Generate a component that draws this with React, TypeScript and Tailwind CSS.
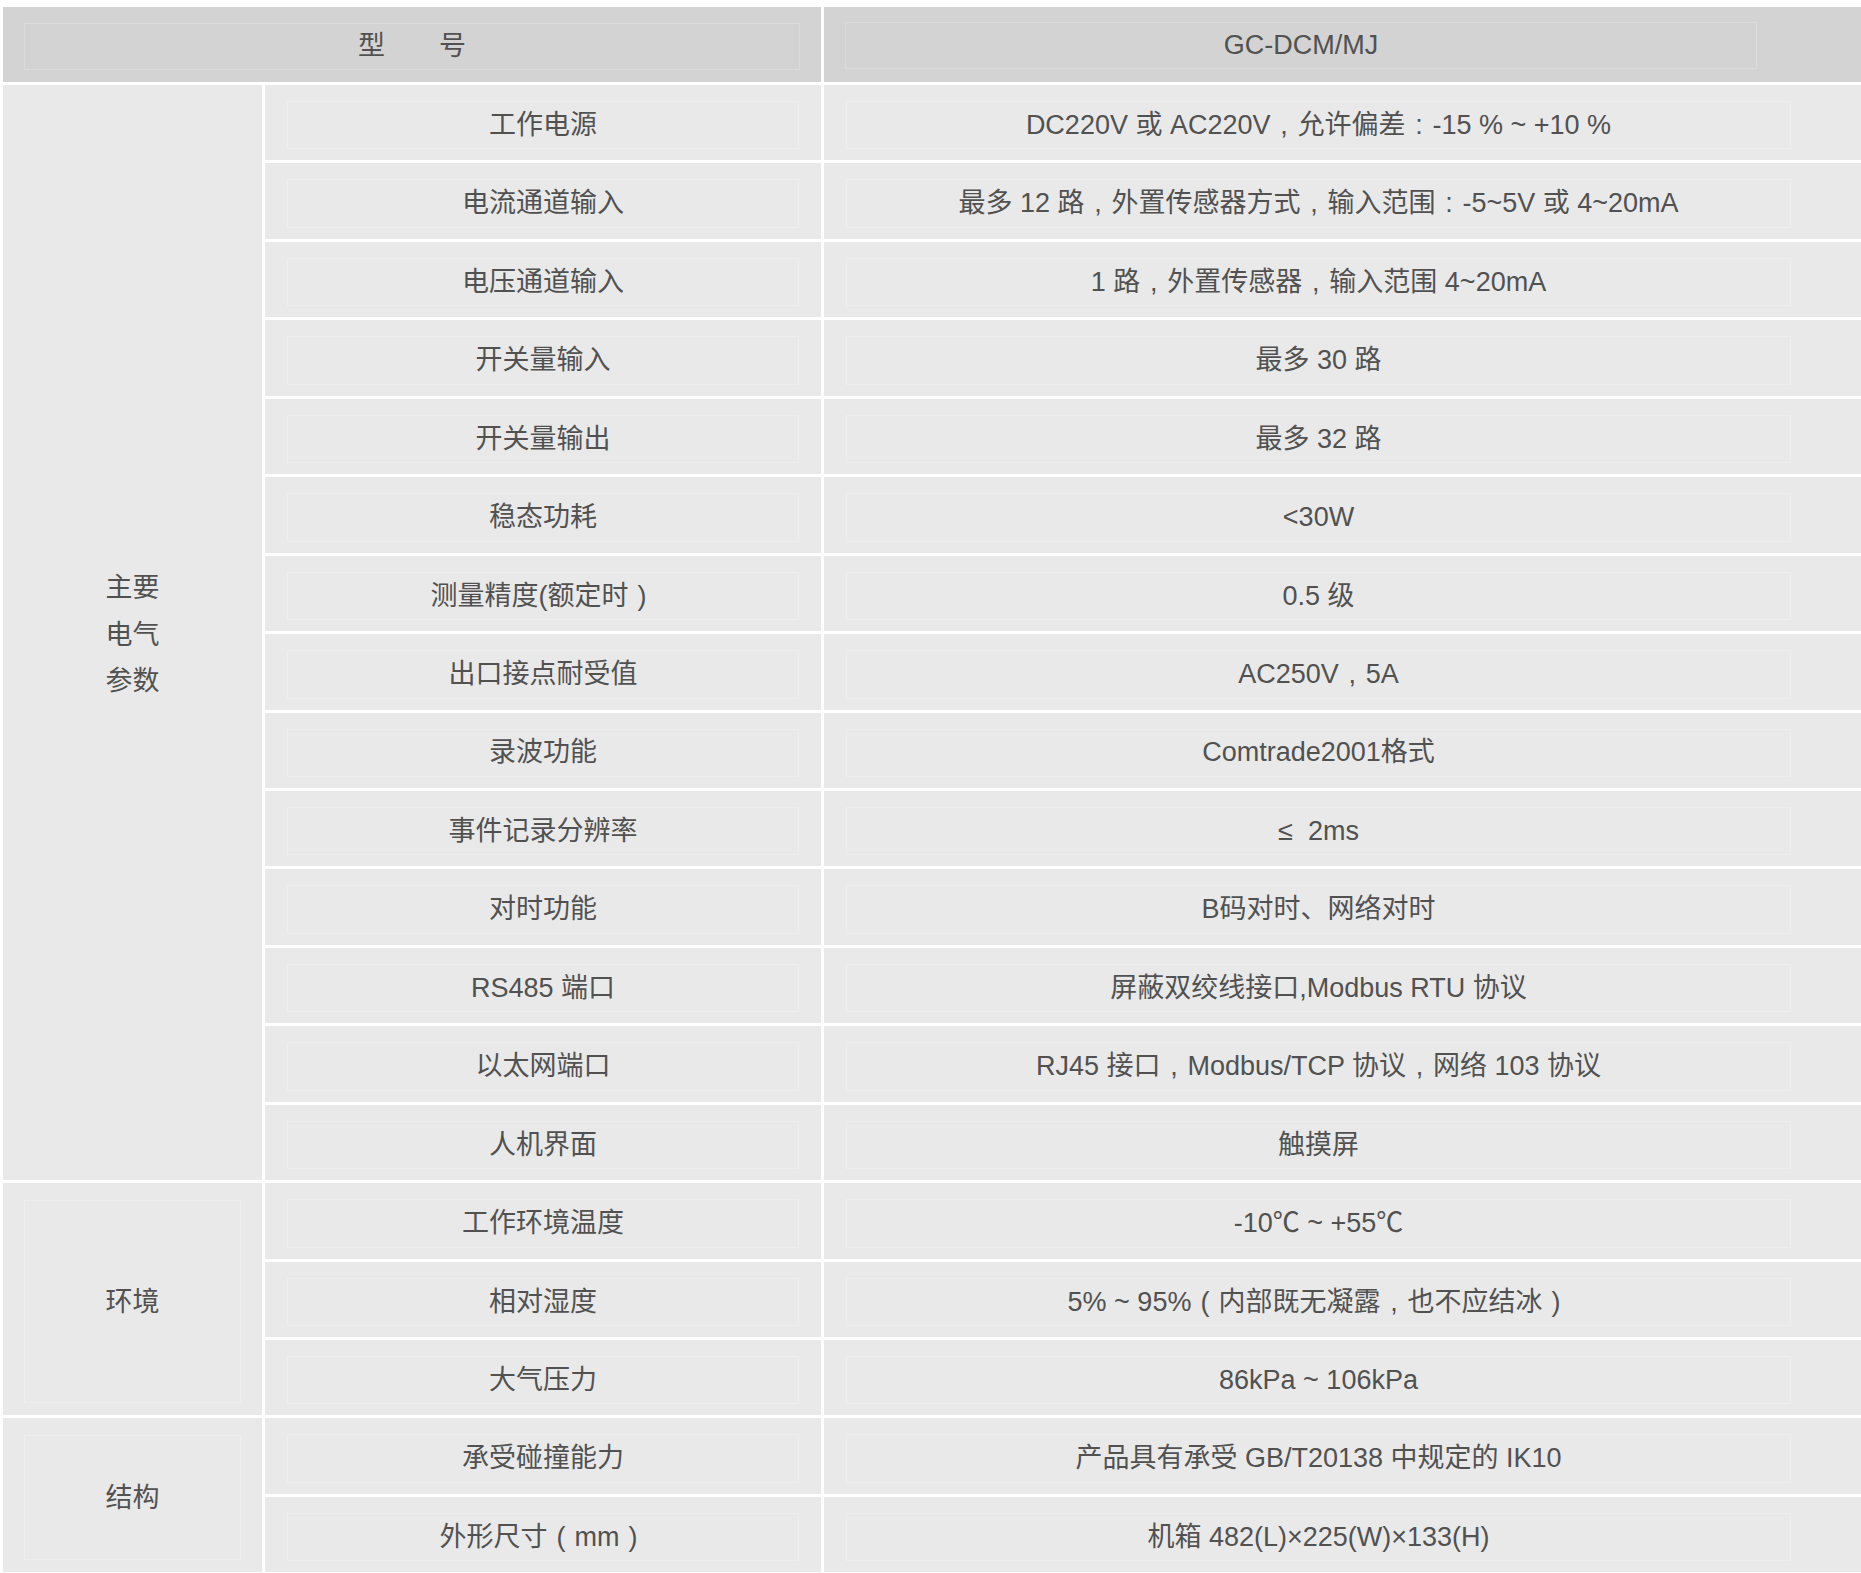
import React from "react";

type Row = { name: string; value: string };

const rows: Row[] = [
  { name: "工作电源", value: "DC220V 或 AC220V，允许偏差：-15 % ~ +10 %" },
  { name: "电流通道输入", value: "最多 12 路，外置传感器方式，输入范围：-5~5V 或 4~20mA" },
  { name: "电压通道输入", value: "1 路，外置传感器，输入范围 4~20mA" },
  { name: "开关量输入", value: "最多 30 路" },
  { name: "开关量输出", value: "最多 32 路" },
  { name: "稳态功耗", value: "<30W" },
  { name: "测量精度(额定时）", value: "0.5 级" },
  { name: "出口接点耐受值", value: "AC250V，5A" },
  { name: "录波功能", value: "Comtrade2001格式" },
  { name: "事件记录分辨率", value: "≤  2ms" },
  { name: "对时功能", value: "B码对时、网络对时" },
  { name: "RS485 端口", value: "屏蔽双绞线接口,Modbus RTU 协议" },
  { name: "以太网端口", value: "RJ45 接口，Modbus/TCP 协议，网络 103 协议" },
  { name: "人机界面", value: "触摸屏" },
  { name: "工作环境温度", value: "-10℃ ~ +55℃" },
  { name: "相对湿度", value: "5% ~ 95%（内部既无凝露，也不应结冰）" },
  { name: "大气压力", value: "86kPa ~ 106kPa" },
  { name: "承受碰撞能力", value: "产品具有承受 GB/T20138 中规定的 IK10" },
  { name: "外形尺寸（mm）", value: "机箱 482(L)×225(W)×133(H)" },
];

const punct: Record<string, string> = { "，": ",", "：": ":", "（": "(", "）": ")" };

// full-width punctuation sits centred in its em box in the original
function Txt({ text }: { text: string }) {
  const parts = text.split(/([，：（）])/);
  return (
    <>
      {parts.map((p, i) =>
        punct[p] ? (
          <span key={i} className="inline-block w-[1em] text-center">
            {punct[p]}
          </span>
        ) : (
          <React.Fragment key={i}>{p}</React.Fragment>
        )
      )}
    </>
  );
}

// faint inner box, like the <p> borders in the original table
function Inner({ children, className = "" }: { children: React.ReactNode; className?: string }) {
  return (
    <div className={`flex flex-1 items-center justify-center border border-[#eeeeee] ${className}`}>
      {children}
    </div>
  );
}

export default function App() {
  return (
    <div
      className="h-[1573px] w-[1861px] overflow-hidden bg-white pl-[3px] pt-[7px] text-[27px] text-[#515151]"
      style={{ fontFamily: '"Liberation Sans", "Noto Sans CJK SC", sans-serif' }}
    >
      <div className="grid grid-cols-[259px_556px_1037px] grid-rows-[75px_repeat(19,75.44px)] gap-[3px]">
        {/* header */}
        <div className="col-span-2 flex bg-[#d3d3d3] px-[21px] pb-[12px] pt-[16px]">
          <div className="flex flex-1 items-center justify-center border border-[#dbdbdb] whitespace-pre">
            型　　号
          </div>
        </div>
        <div className="flex bg-[#d3d3d3] pb-[13px] pl-[21px] pr-[104px] pt-[15px]">
          <div className="flex flex-1 items-center justify-center border border-[#dbdbdb]">GC-DCM/MJ</div>
        </div>

        {/* group labels */}
        <div className="row-span-14 col-start-1 row-start-2 flex bg-[#e9e9e9] px-[21px] pb-[12px] pt-[17px]">
          <div className="flex flex-1 items-center justify-center">
            <div className="flex flex-col items-center leading-[46.5px]">
              <span>主要</span>
              <span>电气</span>
              <span>参数</span>
            </div>
          </div>
        </div>
        <div className="row-span-3 col-start-1 row-start-16 flex bg-[#e9e9e9] px-[21px] pb-[12px] pt-[17px]">
          <Inner>环境</Inner>
        </div>
        <div className="row-span-2 col-start-1 row-start-19 flex bg-[#e9e9e9] px-[21px] pb-[12px] pt-[17px]">
          <Inner>结构</Inner>
        </div>

        {rows.map((r) => (
          <React.Fragment key={r.name}>
            <div className="col-start-2 flex bg-[#e9e9e9] px-[22px] pb-[11px] pt-[16px]">
              <Inner className="whitespace-pre">
                <Txt text={r.name} />
              </Inner>
            </div>
            <div className="col-start-3 flex bg-[#e9e9e9] pb-[11px] pl-[22px] pr-[70px] pt-[16px]">
              <Inner className="whitespace-pre">
                <Txt text={r.value} />
              </Inner>
            </div>
          </React.Fragment>
        ))}
      </div>
    </div>
  );
}
